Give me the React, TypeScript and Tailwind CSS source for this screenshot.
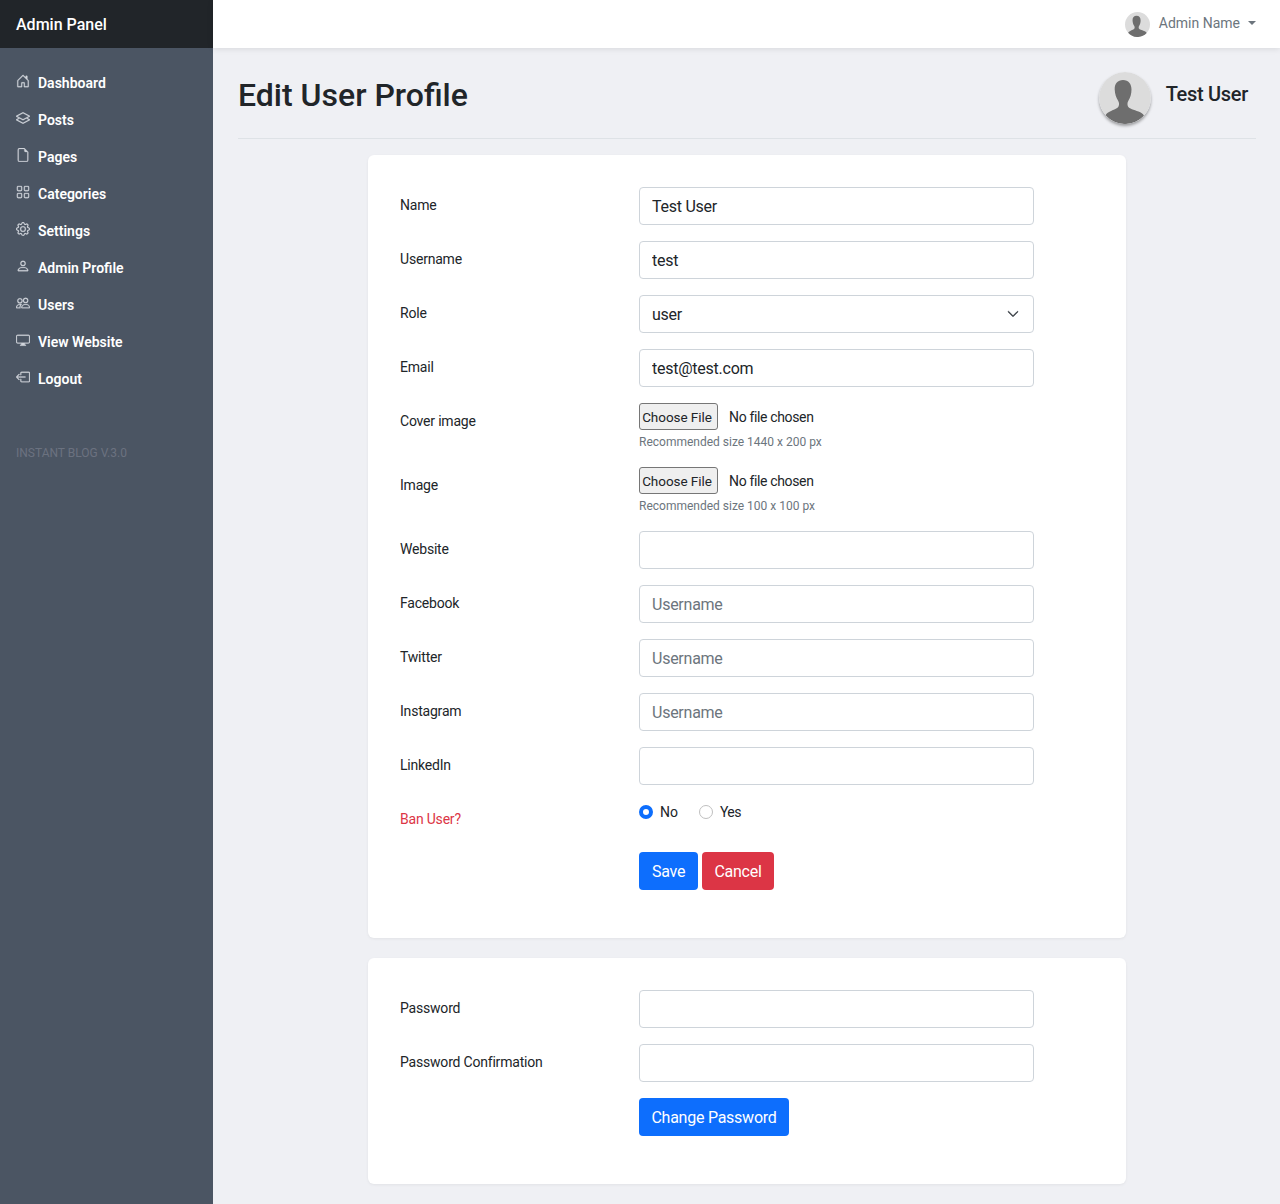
import React from "react";
import { BsHouseDoor, BsLayers, BsFileEarmark, BsGrid, BsGear, BsPerson, BsPeople, BsDisplay, BsBoxArrowLeft, BsChevronDown } from "react-icons/bs";

const nav = [
  ["Dashboard", BsHouseDoor],
  ["Posts", BsLayers],
  ["Pages", BsFileEarmark],
  ["Categories", BsGrid],
  ["Settings", BsGear],
  ["Admin Profile", BsPerson],
  ["Users", BsPeople],
  ["View Website", BsDisplay],
  ["Logout", BsBoxArrowLeft],
] as const;

function Avatar({ className }: { className: string }) {
  return (
    <svg viewBox="0 0 52 52" className={className}>
      <circle cx="26" cy="26" r="26" fill="#dcdcdc" />
      <path
        d="M24 8C18.500 8 15.500 12 15.700 17.500C15.900 22 17.200 26 19 28.500C20.300 30.300 20.300 33 19.500 34.500C18.500 36.500 14 38 11 39.500C9 40.500 7.500 41.500 6.500 43.200A26 26 0 0 0 45 43.800C44 41.500 42 40.500 39.500 39.500C35 38 30 36.500 29 34.500C28.200 33 28.200 30.300 29.500 28.500C31.200 26 32.500 22 32.500 17.500C32.500 12 29.500 8 24 8Z"
        fill="#6e6e6e"
      />
    </svg>
  );
}

const inputCls =
  "block w-full h-[38px] rounded-[4px] border border-[#ced4da] bg-white px-3 text-base tracking-[-0.25px] text-[#212529] placeholder:text-[#6c757d] outline-none";

const labelCls = "w-[239px] shrink-0 pt-2 text-sm leading-[21px] tracking-[-0.2px]";

function Row({ label, children }: { label: string; children: React.ReactNode }) {
  return (
    <div className="flex mb-4">
      <label className={`${labelCls} text-[#212529]`}>{label}</label>
      <div className="w-[395px]">{children}</div>
    </div>
  );
}

function TextRow({ label, value, placeholder }: { label: string; value?: string; placeholder?: string }) {
  return (
    <Row label={label}>
      <input className={inputCls} defaultValue={value} placeholder={placeholder} />
    </Row>
  );
}

function FileRow({ label, hint }: { label: string; hint: string }) {
  return (
    <div className="flex h-12 mb-4">
      <label className={`${labelCls} text-[#212529]`}>{label}</label>
      <div className="w-[395px]">
        <input
          type="file"
          className="block w-full h-[27px] text-sm tracking-[-0.35px] text-[#212529] [&::file-selector-button]:h-[27px] [&::file-selector-button]:w-[79px] [&::file-selector-button]:mr-[11px] [&::file-selector-button]:rounded-[3px] [&::file-selector-button]:border [&::file-selector-button]:border-[#767676] [&::file-selector-button]:bg-[#efefef] [&::file-selector-button]:pt-[2px] [&::file-selector-button]:pr-[3px] [&::file-selector-button]:text-[13.5px] [&::file-selector-button]:tracking-[-0.05px]"
        />
        <div className="mt-[3px] text-xs leading-[18px] text-[#6c757d]">{hint}</div>
      </div>
    </div>
  );
}

const btnCls = "h-[38px] rounded-[4px] pt-px text-base tracking-[-0.25px] text-white";

export default function App() {
  return (
    <div className="flex min-h-screen bg-[#eff0f4] text-[#212529] font-['Roboto','Open_Sans',sans-serif]">
      <aside className="w-[213px] shrink-0 bg-[#4b5563]">
        <div className="flex h-12 items-center bg-[#212529] px-4 pt-px text-base font-medium text-white">Admin Panel</div>
        <nav className="pt-4">
          {nav.map(([name, Icon]) => (
            <a key={name} className="flex h-[37px] items-center px-4 text-sm font-semibold text-white">
              <Icon className="mr-2 mb-[3px] h-3.5 w-3.5 stroke-[0.3] text-[#d1d5db]" />
              {name}
            </a>
          ))}
        </nav>
        <div className="mt-[47px] px-4 text-xs leading-[18px] text-[#6b7280]">INSTANT BLOG V.3.0</div>
      </aside>

      <div className="min-w-0 flex-1">
        <header className="flex h-12 items-center justify-end bg-white pr-6 shadow-[0_1px_6px_rgba(0,0,0,0.1)]">
          <Avatar className="h-[25px] w-[25px]" />
          <span className="ml-[9px] mb-[2px] text-sm text-[#6c757d]">Admin Name</span>
          <span className="ml-2 mb-[3px] h-0 w-0 border-x-[4px] border-t-[4px] border-x-transparent border-t-[#6c757d]" />
        </header>

        <main className="pl-[25px] pr-6 pb-5">
          <div className="flex h-[91px] items-center justify-between border-b border-[#dee2e6] pt-1 pr-2">
            <h1 className="text-[32px] font-medium leading-10 text-[#212529]">Edit User Profile</h1>
            <div className="mt-[6px] flex items-center">
              <Avatar className="h-[52px] w-[52px] rounded-full shadow-[0_2px_3px_rgba(0,0,0,0.35)]" />
              <span className="ml-[15px] mb-[8px] text-xl font-medium tracking-[-0.3px]">Test User</span>
            </div>
          </div>

          <section className="mx-auto mt-4 w-[758px] rounded-[6px] bg-white p-8 shadow-[0_1px_3px_rgba(0,0,0,0.06)]">
            <TextRow label="Name" value="Test User" />
            <TextRow label="Username" value="test" />
            <Row label="Role">
              <div className="relative">
                <select className={`${inputCls} appearance-none pt-[2px]`} defaultValue="user">
                  <option>user</option>
                  <option>admin</option>
                </select>
                <BsChevronDown className="pointer-events-none absolute right-[15px] top-[13px] h-3 w-3 stroke-1 text-[#343a40]" />
              </div>
            </Row>
            <TextRow label="Email" value="test@test.com" />
            <FileRow label="Cover image" hint="Recommended size 1440 x 200 px" />
            <FileRow label="Image" hint="Recommended size 100 x 100 px" />
            <TextRow label="Website" />
            <TextRow label="Facebook" placeholder="Username" />
            <TextRow label="Twitter" placeholder="Username" />
            <TextRow label="Instagram" placeholder="Username" />
            <TextRow label="LinkedIn" />
            <div className="flex h-[35px] mb-4">
              <label className={`${labelCls} text-[#dc3545]`}>Ban User?</label>
              <div className="flex items-start text-sm leading-[21px]">
                <label className="flex items-center">
                  <span className="h-[14px] w-[14px] rounded-full border-[4px] border-[#0d6efd] bg-white" />
                  <span className="ml-[7px] pt-px">No</span>
                </label>
                <label className="ml-[21px] flex items-center">
                  <span className="h-[14px] w-[14px] rounded-full border border-[#bfbfbf] bg-white" />
                  <span className="ml-[7px] pt-px tracking-[-0.6px]">Yes</span>
                </label>
              </div>
            </div>
            <div className="flex pl-[239px] mb-4">
              <button className={`${btnCls} w-[59px] bg-[#0d6efd]`}>Save</button>
              <button className={`${btnCls} ml-1 w-[72px] bg-[#dc3545]`}>Cancel</button>
            </div>
          </section>

          <section className="mx-auto mt-5 w-[758px] rounded-[6px] bg-white p-8 shadow-[0_1px_3px_rgba(0,0,0,0.06)]">
            <TextRow label="Password" />
            <TextRow label="Password Confirmation" />
            <div className="flex pl-[239px] mb-4">
              <button className={`${btnCls} w-[150px] bg-[#0d6efd]`}>Change Password</button>
            </div>
          </section>
        </main>
      </div>
    </div>
  );
}
